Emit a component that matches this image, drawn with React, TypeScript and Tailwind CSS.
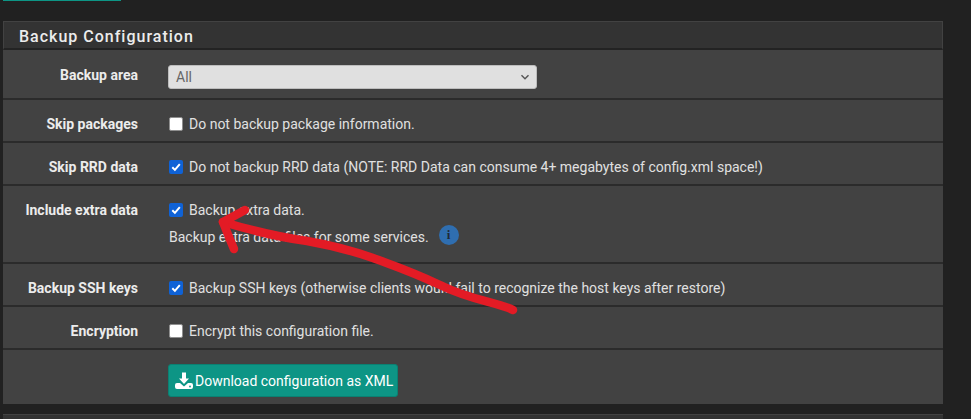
import React from "react";

function Check({ checked }: { checked?: boolean }) {
  return checked ? (
    <span className="w-[14px] h-[14px] rounded-[2px] bg-[#0f62d6] flex items-center justify-center shrink-0">
      <svg width="12" height="12" viewBox="0 0 12 12">
        <path d="M2.3 6.3 L4.9 8.9 L9.8 3.2" fill="none" stroke="#fff" strokeWidth="2" />
      </svg>
    </span>
  ) : (
    <span className="w-[14px] h-[14px] rounded-[2px] bg-white border border-[#8f8f8f] shrink-0" />
  );
}

function Row({ label, h, pt, children, last }: { label?: string; h: string; pt: string; children: React.ReactNode; last?: boolean }) {
  return (
    <div className={`flex ${h} ${last ? "" : "border-b-2 border-[#2b2b2b]"}`}>
      <div className={`w-[135px] shrink-0 text-right font-bold text-[14px] text-[#ececec] ${pt} leading-[20px]`}>{label}</div>
      <div className="ml-[30px] flex-1 text-[14px] text-[#e0e0e0] leading-[20px]">{children}</div>
    </div>
  );
}

function CheckLine({ checked, text }: { checked?: boolean; text: string }) {
  return (
    <div className="flex items-center gap-[6px] pt-[14px] pl-[1px]">
      <Check checked={checked} />
      <span>{text}</span>
    </div>
  );
}

export default function App() {
  return (
    <div className="relative w-[971px] h-[419px] overflow-hidden bg-[#212121] font-['Roboto',sans-serif]">
      <div className="ml-[3px] w-[118px] h-[1px] bg-[#0d9585]" />
      <div className="ml-[3px] mt-[20px] w-[940px] bg-[#424242]">
        <div className="h-[29px] bg-[#333333] border border-[#424242] border-b-2 border-b-[#232323] pl-[15px] pt-[1px] text-[16px] font-medium tracking-[1px] text-[#ececec] leading-[27px]">
          Backup Configuration
        </div>
        <Row label="Backup area" h="h-[50px]" pt="pt-[15px]">
          <div className="mt-[15px] w-[369px] h-[24px] rounded-[3px] bg-[#e0e0e0] border border-[#bdbdbd] flex items-center justify-between pl-[7px] pr-[6px] text-[#666666]">
            <span>All</span>
            <svg width="10" height="10" viewBox="0 0 10 10">
              <path d="M1.5 3.2 L5 6.8 L8.5 3.2" fill="none" stroke="#555" strokeWidth="1.4" />
            </svg>
          </div>
        </Row>
        <Row label="Skip packages" h="h-[43px]" pt="pt-[14px]">
          <CheckLine text="Do not backup package information." />
        </Row>
        <Row label="Skip RRD data" h="h-[43px]" pt="pt-[14px]">
          <CheckLine checked text="Do not backup RRD data (NOTE: RRD Data can consume 4+ megabytes of config.xml space!)" />
        </Row>
        <Row label="Include extra data" h="h-[78px]" pt="pt-[14px]">
          <CheckLine checked text="Backup extra data." />
          <div className="flex items-center mt-[7px] pl-[1px]">
            <span>Backup extra data files for some services.</span>
            <span className="ml-[10px] -mt-[4px] w-[20px] h-[20px] rounded-full bg-[#2f6eb0] flex items-center justify-center text-[#1f2a36] text-[13px] font-bold font-['Liberation_Serif',serif]">
              i
            </span>
          </div>
        </Row>
        <Row label="Backup SSH keys" h="h-[43px]" pt="pt-[14px]">
          <CheckLine checked text="Backup SSH keys (otherwise clients would fail to recognize the host keys after restore)" />
        </Row>
        <Row label="Encryption" h="h-[43px]" pt="pt-[14px]">
          <CheckLine text="Encrypt this configuration file." />
        </Row>
        <Row h="h-[54px]" pt="pt-[14px]" last>
          <div className="mt-[14px] w-[230px] h-[33px] rounded-[3px] bg-[#0d9585] border border-[#0b8072] flex items-center pl-[5px] text-white text-[14px] gap-[1px]">
            <svg width="20" height="20" viewBox="0 0 20 20" className="shrink-0">
              <path d="M8 1.5 H12 V7.5 H15 L10 13 L5 7.5 H8 Z" fill="#fff" />
              <path d="M1 14 Q1 12 3 12 H6 L10 15.5 L14 12 H17 Q19 12 19 14 V16 Q19 18 17 18 H3 Q1 18 1 16 Z" fill="#fff" />
              <circle cx="16" cy="15.5" r="0.9" fill="#0d9585" />
            </svg>
            <span>Download configuration as XML</span>
          </div>
        </Row>
      </div>
      <div className="ml-[3px] mt-[10px] w-[940px] h-[10px] bg-[#333333] border-t border-[#424242]" />
      <svg className="absolute left-0 top-0 pointer-events-none" width="971" height="419" viewBox="0 0 971 419" fill="none">
        <path
          d="M513 310 C500 303 470 300 440 285 C410 271 400 268 373 258 C350 250 330 245 307 241 C285 238 250 230 223 222"
          stroke="#e31b25"
          strokeWidth="8.5"
          strokeLinecap="round"
          strokeLinejoin="round"
        />
        <path
          d="M245 210 L223 222 Q228 235 234 249"
          stroke="#e31b25"
          strokeWidth="8.5"
          strokeLinecap="round"
          strokeLinejoin="round"
        />
      </svg>
    </div>
  );
}
